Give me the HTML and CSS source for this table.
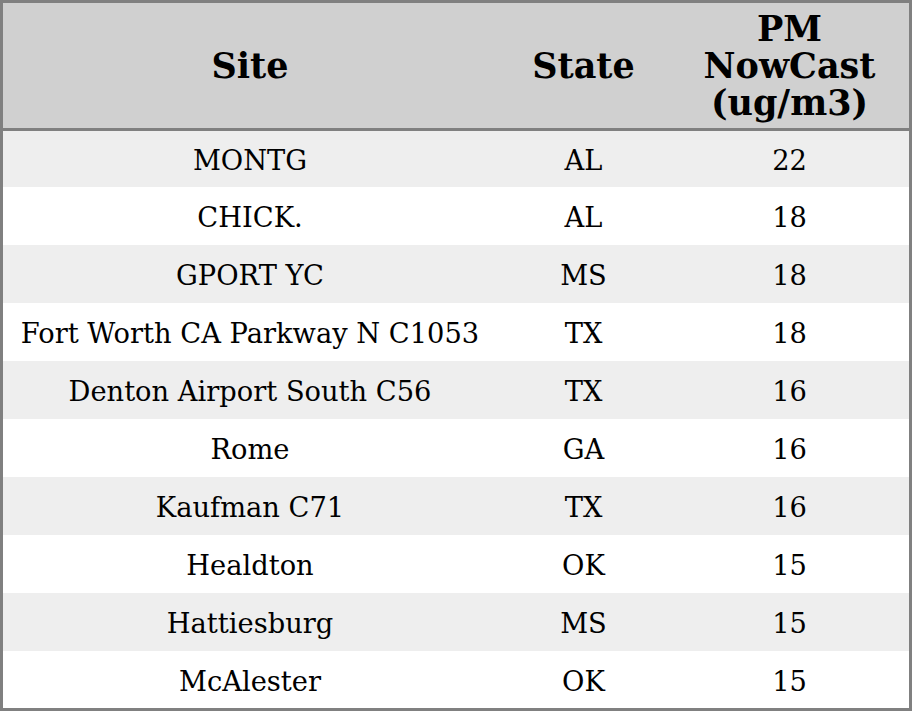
FILE: index.html
```html
<!DOCTYPE html>
<html>
<head>
<meta charset="utf-8">
<link rel="stylesheet" href="styles.css">
</head>
<body>
<table class="data">
  <colgroup>
    <col class="c-site">
    <col class="c-state">
    <col class="c-pm">
  </colgroup>
  <thead>
    <tr class="head">
      <th>Site</th>
      <th>State</th>
      <th>PM<br>NowCast<br>(ug/m3)</th>
    </tr>
  </thead>
  <tbody>
    <tr class="odd first"><td>MONTG</td><td>AL</td><td>22</td></tr>
    <tr><td>CHICK.</td><td>AL</td><td>18</td></tr>
    <tr class="odd"><td>GPORT YC</td><td>MS</td><td>18</td></tr>
    <tr><td>Fort Worth CA Parkway N C1053</td><td>TX</td><td>18</td></tr>
    <tr class="odd"><td>Denton Airport South C56</td><td>TX</td><td>16</td></tr>
    <tr><td>Rome</td><td>GA</td><td>16</td></tr>
    <tr class="odd"><td>Kaufman C71</td><td>TX</td><td>16</td></tr>
    <tr><td>Healdton</td><td>OK</td><td>15</td></tr>
    <tr class="odd"><td>Hattiesburg</td><td>MS</td><td>15</td></tr>
    <tr class="last"><td>McAlester</td><td>OK</td><td>15</td></tr>
  </tbody>
</table>
</body>
</html>
```
FILE: styles.css
```css
html, body {
  margin: 0;
  padding: 0;
  background: #ffffff;
}
.data {
  width: 912px;
  table-layout: fixed;
  border-collapse: separate;
  border-spacing: 0;
  border: 3px solid #808080;
  font-family: "DejaVu Serif", serif;
  color: #000;
}
.c-site { width: 494px; }
.c-state { width: 173px; }
.c-pm { width: 239px; }
.data th {
  background: #d0d0d0;
  font-size: 35px;
  font-weight: bold;
  line-height: 37px;
  height: 125px;
  padding: 0;
  border-bottom: 3px solid #808080;
  text-align: center;
  vertical-align: middle;
}
.data td {
  box-sizing: border-box;
  font-size: 27.3px;
  height: 58px;
  padding: 3px 0 0 0;
  text-align: center;
  vertical-align: middle;
}
.data tr.first td { height: 56px; }
.data tr.last td { height: 57px; }
.data tr.odd td { background: #eeeeee; }
```
